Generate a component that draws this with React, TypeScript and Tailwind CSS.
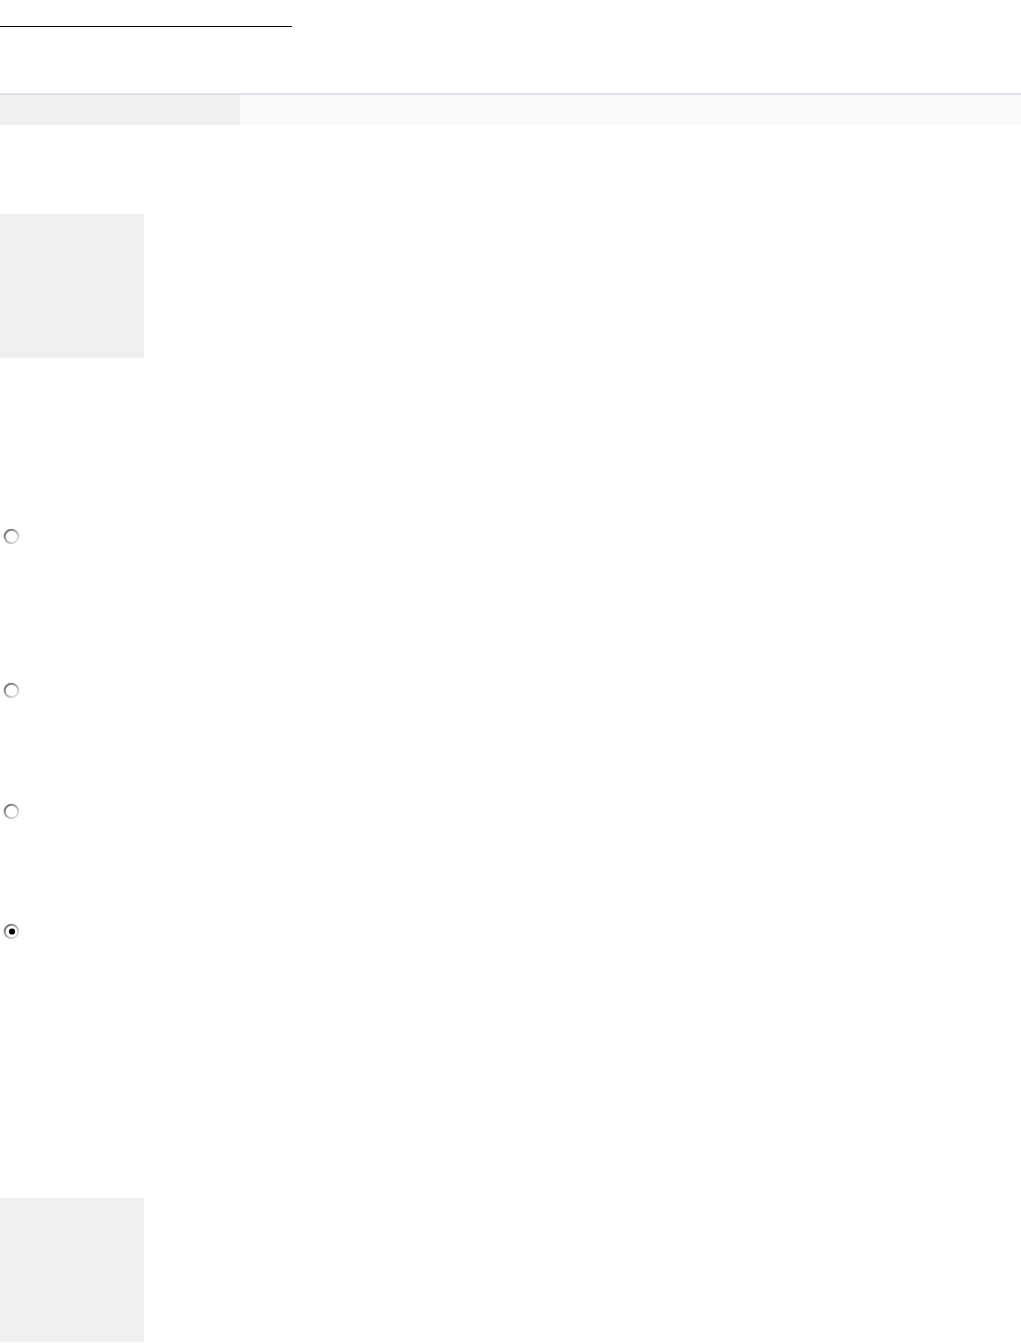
import React from "react";

function Radio({ checked = false, className = "" }: { checked?: boolean; className?: string }) {
  const id = checked ? "rg1" : "rg0";
  return (
    <svg width="17" height="17" viewBox="0 0 17 17" className={className}>
      <defs>
        <linearGradient id={id} x1="0" y1="0" x2="1" y2="1">
          <stop offset="0" stopColor="#5f5f5f" />
          <stop offset="0.45" stopColor="#a8a8a8" />
          <stop offset="1" stopColor="#f0f0f0" />
        </linearGradient>
      </defs>
      <circle cx="8.5" cy="8.5" r="6.8" fill="#ffffff" stroke={`url(#${id})`} strokeWidth="2" />
      {checked && <circle cx="9" cy="8.5" r="3.1" fill="#000000" />}
    </svg>
  );
}

export default function App() {
  return (
    <div className="flex flex-col bg-white w-full min-h-[1343px]" style={{ fontFamily: '"Liberation Sans", Arial, sans-serif' }}>
      <div className="mt-[26px] h-px w-[292px] bg-black" />
      <div className="mt-[66px] border-t-2 border-[#dde3e8] flex h-[32px]">
        <div className="w-[240px] bg-[#efefef]" />
        <div className="flex-1 bg-[#f9f9f9]" />
      </div>
      <div className="mt-[89px] w-[144px] h-[144px] bg-[#efefef]" />
      <Radio className="mt-[170px] ml-[3px]" />
      <Radio className="mt-[137px] ml-[3px]" />
      <Radio className="mt-[104px] ml-[3px]" />
      <Radio checked className="mt-[103px] ml-[3px]" />
      <div className="mt-[258px] w-[144px] h-[144px] bg-[#efefef]" />
    </div>
  );
}
